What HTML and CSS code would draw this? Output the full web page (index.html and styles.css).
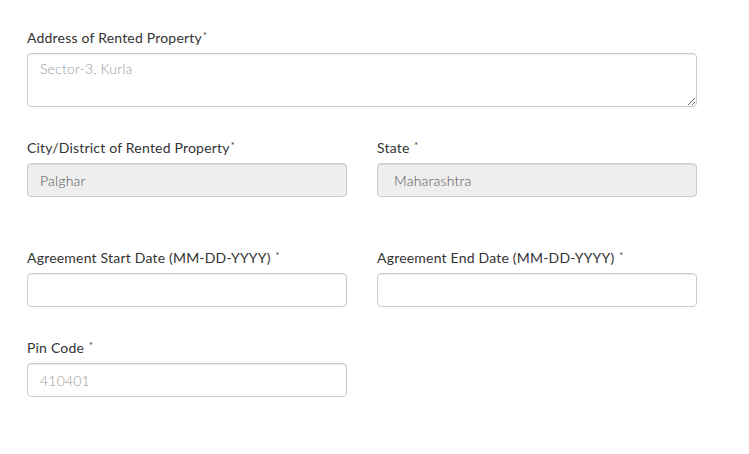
FILE: index.html
```html
<!DOCTYPE html>
<html>
<head>
<meta charset="utf-8">
<link rel="stylesheet" href="styles.css">
</head>
<body>
<form class="form">
  <div class="group full">
    <label class="label">Address of Rented Property<span class="req">*</span></label>
    <textarea class="control area" placeholder="Sector-3, Kurla"></textarea>
  </div>
  <div class="row">
    <div class="group">
      <label class="label">City/District of Rented Property<span class="req">*</span></label>
      <input class="control disabled" value="Palghar" disabled>
    </div>
    <div class="group">
      <label class="label">State <span class="req">*</span></label>
      <input class="control disabled wide-pad" value="Maharashtra" disabled>
    </div>
  </div>
  <div class="row tall-gap">
    <div class="group">
      <label class="label">Agreement Start Date (MM-DD-YYYY) <span class="req">*</span></label>
      <input class="control">
    </div>
    <div class="group">
      <label class="label">Agreement End Date (MM-DD-YYYY) <span class="req">*</span></label>
      <input class="control">
    </div>
  </div>
  <div class="row">
    <div class="group">
      <label class="label">Pin Code <span class="req">*</span></label>
      <input class="control" placeholder="410401">
    </div>
  </div>
</form>
</body>
</html>
```
FILE: styles.css
```css
html, body {
  margin: 0;
  padding: 0;
  background: #fff;
}
body {
  font-family: Lato, "Open Sans", sans-serif;
  color: #333;
}
.form {
  width: 670px;
  padding: 28px 0 0 27px;
  display: flex;
  flex-direction: column;
  gap: 31px;
}
.row {
  display: grid;
  grid-template-columns: 320px 320px;
  column-gap: 30px;
}
.tall-gap {
  margin-top: 20px;
}
.group {
  display: flex;
  flex-direction: column;
}
.label {
  font-size: 14px;
  line-height: 20px;
  margin-bottom: 5px;
  color: #333;
  letter-spacing: 0.2px;
}
.req {
  font-size: 9px;
  vertical-align: top;
  line-height: 15px;
  margin-left: 1px;
}
.control {
  box-sizing: border-box;
  height: 34px;
  width: 100%;
  border: 1px solid #ccc;
  border-radius: 4px;
  padding: 6px 12px;
  font-family: inherit;
  font-size: 14px;
  font-weight: 300;
  letter-spacing: 0.2px;
  color: #555;
  background: #fff;
  box-shadow: inset 0 1px 1px rgba(0,0,0,0.075);
  margin: 0;
}
.control::placeholder {
  color: #999;
}
.area {
  height: 54px;
  resize: vertical;
  display: block;
}
.disabled {
  background: #eee;
  color: #555;
  -webkit-text-fill-color: #555;
  opacity: 1;
}
.wide-pad {
  padding-left: 16px;
}
```
